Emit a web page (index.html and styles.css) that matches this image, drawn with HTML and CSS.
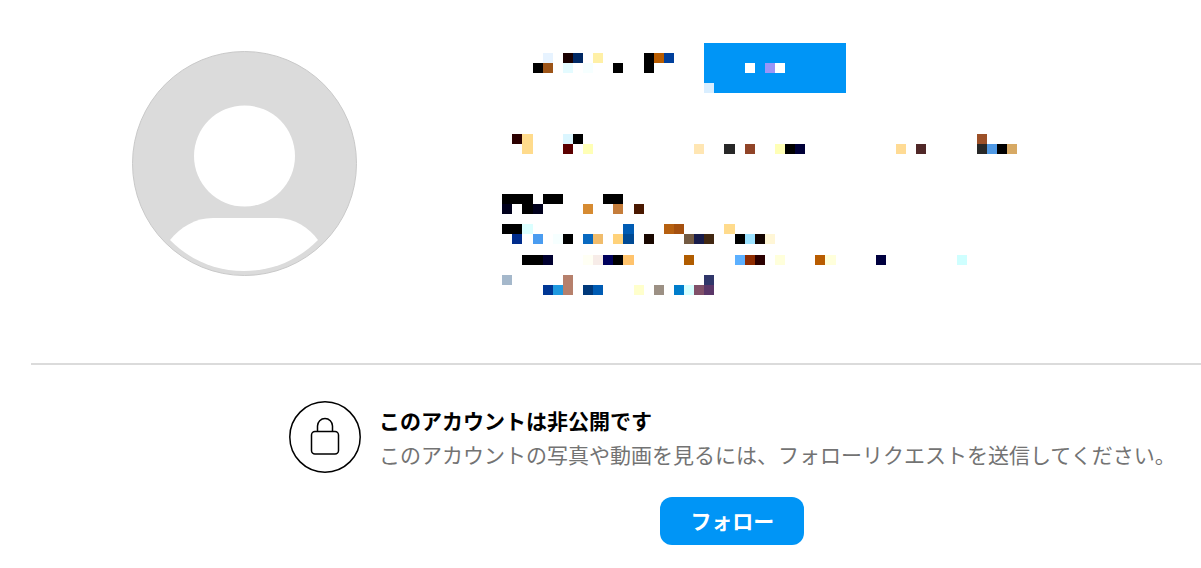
FILE: index.html
```
<!DOCTYPE html>
<html lang="ja">
  <head>
    <meta charset="UTF-8" />
    <meta name="viewport" content="width=device-width, initial-scale=1.0" />
    <title>プロフィール</title>
    <link rel="stylesheet" href="styles.css">
  </head>
  <body>
    <main class="profile">
      <header class="profile-header">
        <svg class="avatar" viewBox="0 0 225 225" aria-hidden="true">
          <circle cx="112.5" cy="112.5" r="112" fill="#dbdbdb" stroke="#c9c9c9" />
          <circle cx="112.5" cy="105" r="50.5" fill="#fff" />
          <path d="M38 189C49 176 63 167 81 167H145C163 167 177 177 186 189C166 209 141 220 112 220C83 220 58 209 38 189Z" fill="#fff" />
        </svg>

        <div class="profile-info">
          <div class="name-row">
            <svg class="mosaic name" viewBox="502 43 202 50" aria-hidden="true">
              <path d="M644 53h10v20h-10zM533 63h10v10h-10zM613 63h10v10h-10z" fill="#000" />
              <path d="M543 53h10v10h-10z" fill="#e7f3ff" />
              <path d="M563 53h10v10h-10z" fill="#1a0000" />
              <path d="M573 53h10v10h-10z" fill="#002864" />
              <path d="M593 53h10v10h-10z" fill="#fff0a6" />
              <path d="M654 53h10v10h-10z" fill="#b85c00" />
              <path d="M664 53h10v10h-10z" fill="#00409c" />
              <path d="M543 63h10v10h-10z" fill="#9c5418" />
              <path d="M563 63h10v10h-10z" fill="#e4fbff" />
              <path d="M583 63h10v10h-10z" fill="#f6ffff" />
            </svg>
            <button class="name-btn" type="button" aria-label="フォロー">
              <svg class="mosaic btn-mosaic" viewBox="704 43 142 50" aria-hidden="true">
                <path d="M745 63h10v10h-10zM775 63h10v10h-10z" fill="#fff" />
                <path d="M765 63h10v10h-10z" fill="#9a95f7" />
                <path d="M704 83h10v10h-10z" fill="#d9eeff" />
              </svg>
            </button>
          </div>

          <svg class="mosaic stats" viewBox="502 134 515 20" aria-hidden="true">
            <path d="M573 134h10v10h-10zM785 144h10v10h-10zM997 144h10v10h-10z" fill="#000" />
            <path d="M512 134h10v10h-10z" fill="#2c0000" />
            <path d="M522 134h11v20h-11z" fill="#ffdb8c" />
            <path d="M563 134h10v10h-10z" fill="#dbf6ff" />
            <path d="M563 144h10v10h-10z" fill="#5c0000" />
            <path d="M583 144h10v10h-10zM775 144h10v10h-10z" fill="#ffffb6" />
            <path d="M694 144h10v10h-10z" fill="#ffe6b3" />
            <path d="M724 144h11v10h-11zM977 144h10v10h-10z" fill="#282828" />
            <path d="M745 144h10v10h-10z" fill="#904428" />
            <path d="M795 144h10v10h-10z" fill="#000038" />
            <path d="M896 144h10v10h-10z" fill="#ffdb94" />
            <path d="M916 144h10v10h-10z" fill="#502828" />
            <path d="M977 134h10v10h-10z" fill="#9c5028" />
            <path d="M987 144h10v10h-10z" fill="#5099e4" />
            <path d="M1007 144h10v10h-10z" fill="#d7a964" />
          </svg>

          <svg class="mosaic bio" viewBox="502 194 465 101" aria-hidden="true">
            <!-- line 1 -->
            <path d="M502 194h31v10h-31zM543 194h20v10h-20zM603 194h20v10h-20zM522 204h11v10h-11z" fill="#000" />
            <path d="M502 204h10v10h-10zM533 204h10v10h-10z" fill="#00001c" />
            <path d="M583 204h10v10h-10z" fill="#d68b32" />
            <path d="M613 204h10v10h-10z" fill="#c57d3b" />
            <path d="M634 204h10v10h-10z" fill="#4a1800" />
            <!-- line 2 -->
            <path d="M502 224h20v10h-20zM563 234h10v10h-10zM735 234h10v10h-10z" fill="#000" />
            <path d="M522 224h11v10h-11z" fill="#dbffff" />
            <path d="M623 224h11v10h-11z" fill="#005cb4" />
            <path d="M664 224h10v10h-10z" fill="#b66010" />
            <path d="M674 224h10v10h-10z" fill="#a5500f" />
            <path d="M724 224h11v10h-11z" fill="#ffdb8c" />
            <path d="M512 234h10v10h-10z" fill="#002c8c" />
            <path d="M533 234h10v10h-10z" fill="#4a9cf0" />
            <path d="M553 234h10v10h-10z" fill="#f6ffff" />
            <path d="M583 234h10v10h-10z" fill="#0869c0" />
            <path d="M593 234h10v10h-10z" fill="#f0bc6c" />
            <path d="M613 234h10v10h-10z" fill="#ffd27a" />
            <path d="M623 234h11v10h-11z" fill="#004a94" />
            <path d="M644 234h10v10h-10z" fill="#1a0800" />
            <path d="M684 234h10v10h-10z" fill="#735a42" />
            <path d="M694 234h10v10h-10z" fill="#181c4a" />
            <path d="M704 234h10v10h-10z" fill="#422812" />
            <path d="M745 234h10v10h-10z" fill="#9ce2ff" />
            <path d="M755 234h10v10h-10z" fill="#140400" />
            <path d="M765 234h10v10h-10z" fill="#fff6d6" />
            <!-- line 3 -->
            <path d="M522 255h21v10h-21zM613 255h10v10h-10z" fill="#000" />
            <path d="M543 255h10v10h-10z" fill="#000030" />
            <path d="M583 255h10v10h-10z" fill="#fffff4" />
            <path d="M593 255h10v10h-10z" fill="#f7ece8" />
            <path d="M603 255h10v10h-10z" fill="#00005c" />
            <path d="M623 255h11v10h-11z" fill="#ffc36c" />
            <path d="M684 255h10v10h-10z" fill="#b05c00" />
            <path d="M735 255h10v10h-10z" fill="#5cb0ff" />
            <path d="M745 255h10v10h-10z" fill="#902c00" />
            <path d="M755 255h10v10h-10z" fill="#2c0000" />
            <path d="M775 255h10v10h-10zM825 255h11v10h-11z" fill="#ffffdb" />
            <path d="M815 255h10v10h-10z" fill="#b85c00" />
            <path d="M876 255h10v10h-10z" fill="#00003f" />
            <path d="M957 255h10v10h-10z" fill="#cfffff" />
            <!-- line 4 -->
            <path d="M502 275h10v10h-10z" fill="#a5b8cb" />
            <path d="M563 275h10v20h-10z" fill="#b6806c" />
            <path d="M704 275h10v10h-10z" fill="#30366a" />
            <path d="M543 285h10v10h-10z" fill="#003694" />
            <path d="M553 285h10v10h-10z" fill="#209ae0" />
            <path d="M583 285h10v10h-10z" fill="#00387a" />
            <path d="M593 285h10v10h-10z" fill="#005cb4" />
            <path d="M634 285h10v10h-10z" fill="#ffffcc" />
            <path d="M654 285h10v10h-10z" fill="#9c9084" />
            <path d="M674 285h10v10h-10z" fill="#007dcb" />
            <path d="M684 285h10v10h-10z" fill="#d6ffff" />
            <path d="M694 285h10v10h-10z" fill="#805068" />
            <path d="M704 285h10v10h-10z" fill="#5a3668" />
          </svg>
        </div>
      </header>

      <section class="private">
        <div class="private-notice">
          <svg class="lock" viewBox="0 0 72 72" fill="none" stroke="#000" stroke-width="1.5" aria-hidden="true">
            <circle cx="36" cy="36" r="35.2" />
            <rect x="22.5" y="30.5" width="27" height="22.5" rx="3.5" />
            <path d="M28.5 30.5V25a7.5 7.5 0 0 1 15 0v5.5" />
          </svg>
          <div class="private-text">
            <h2>このアカウントは非公開です</h2>
            <p>このアカウントの写真や動画を見るには、フォローリクエストを送信してください。</p>
          </div>
        </div>
        <button class="follow-btn" type="button">フォロー</button>
      </section>
    </main>
  </body>
</html>
```

FILE: styles.css
```
body {
  font-family: "Noto Sans CJK JP", sans-serif;
  margin: 0;
  background-color: #fff;
  color: #000;
}
.profile {
  margin-left: 31px;
}
.profile-header {
  display: flex;
  align-items: flex-start;
  gap: 145px;
  padding: 43px 0 68px 101px;
  border-bottom: 2px solid #dbdbdb;
}
.avatar {
  flex-shrink: 0;
  width: 225px;
  height: 225px;
  margin-top: 8px;
}
.profile-info {
  display: flex;
  flex-direction: column;
}
.name-row {
  display: flex;
  margin-bottom: 41px;
}
.mosaic {
  display: block;
  flex-shrink: 0;
}
.name {
  width: 202px;
  height: 50px;
}
.name-btn {
  padding: 0;
  border: none;
  background-color: #0095f6;
  cursor: pointer;
}
.btn-mosaic {
  width: 142px;
  height: 50px;
}
.stats {
  width: 515px;
  height: 20px;
  margin-bottom: 40px;
}
.bio {
  width: 465px;
  height: 101px;
}
.private {
  display: flex;
  flex-direction: column;
  align-items: center;
  gap: 24px;
  width: fit-content;
  padding: 36px 0 23px 258px;
}
.private-notice {
  display: flex;
  gap: 18px;
}
.lock {
  flex-shrink: 0;
  width: 72px;
  height: 72px;
}
.private-text {
  padding-top: 2px;
}
.private-text h2,
.private-text p {
  margin: 0;
  font-size: 21px;
  line-height: 34px;
}
.private-text h2 {
  font-weight: 700;
}
.private-text p {
  font-weight: 400;
  color: #737373;
}
.follow-btn {
  padding: 0 30px 2px;
  border: none;
  border-radius: 12px;
  background-color: #0095f6;
  color: #fff;
  font-family: inherit;
  font-size: 21px;
  font-weight: 700;
  line-height: 46px;
  cursor: pointer;
}
```
